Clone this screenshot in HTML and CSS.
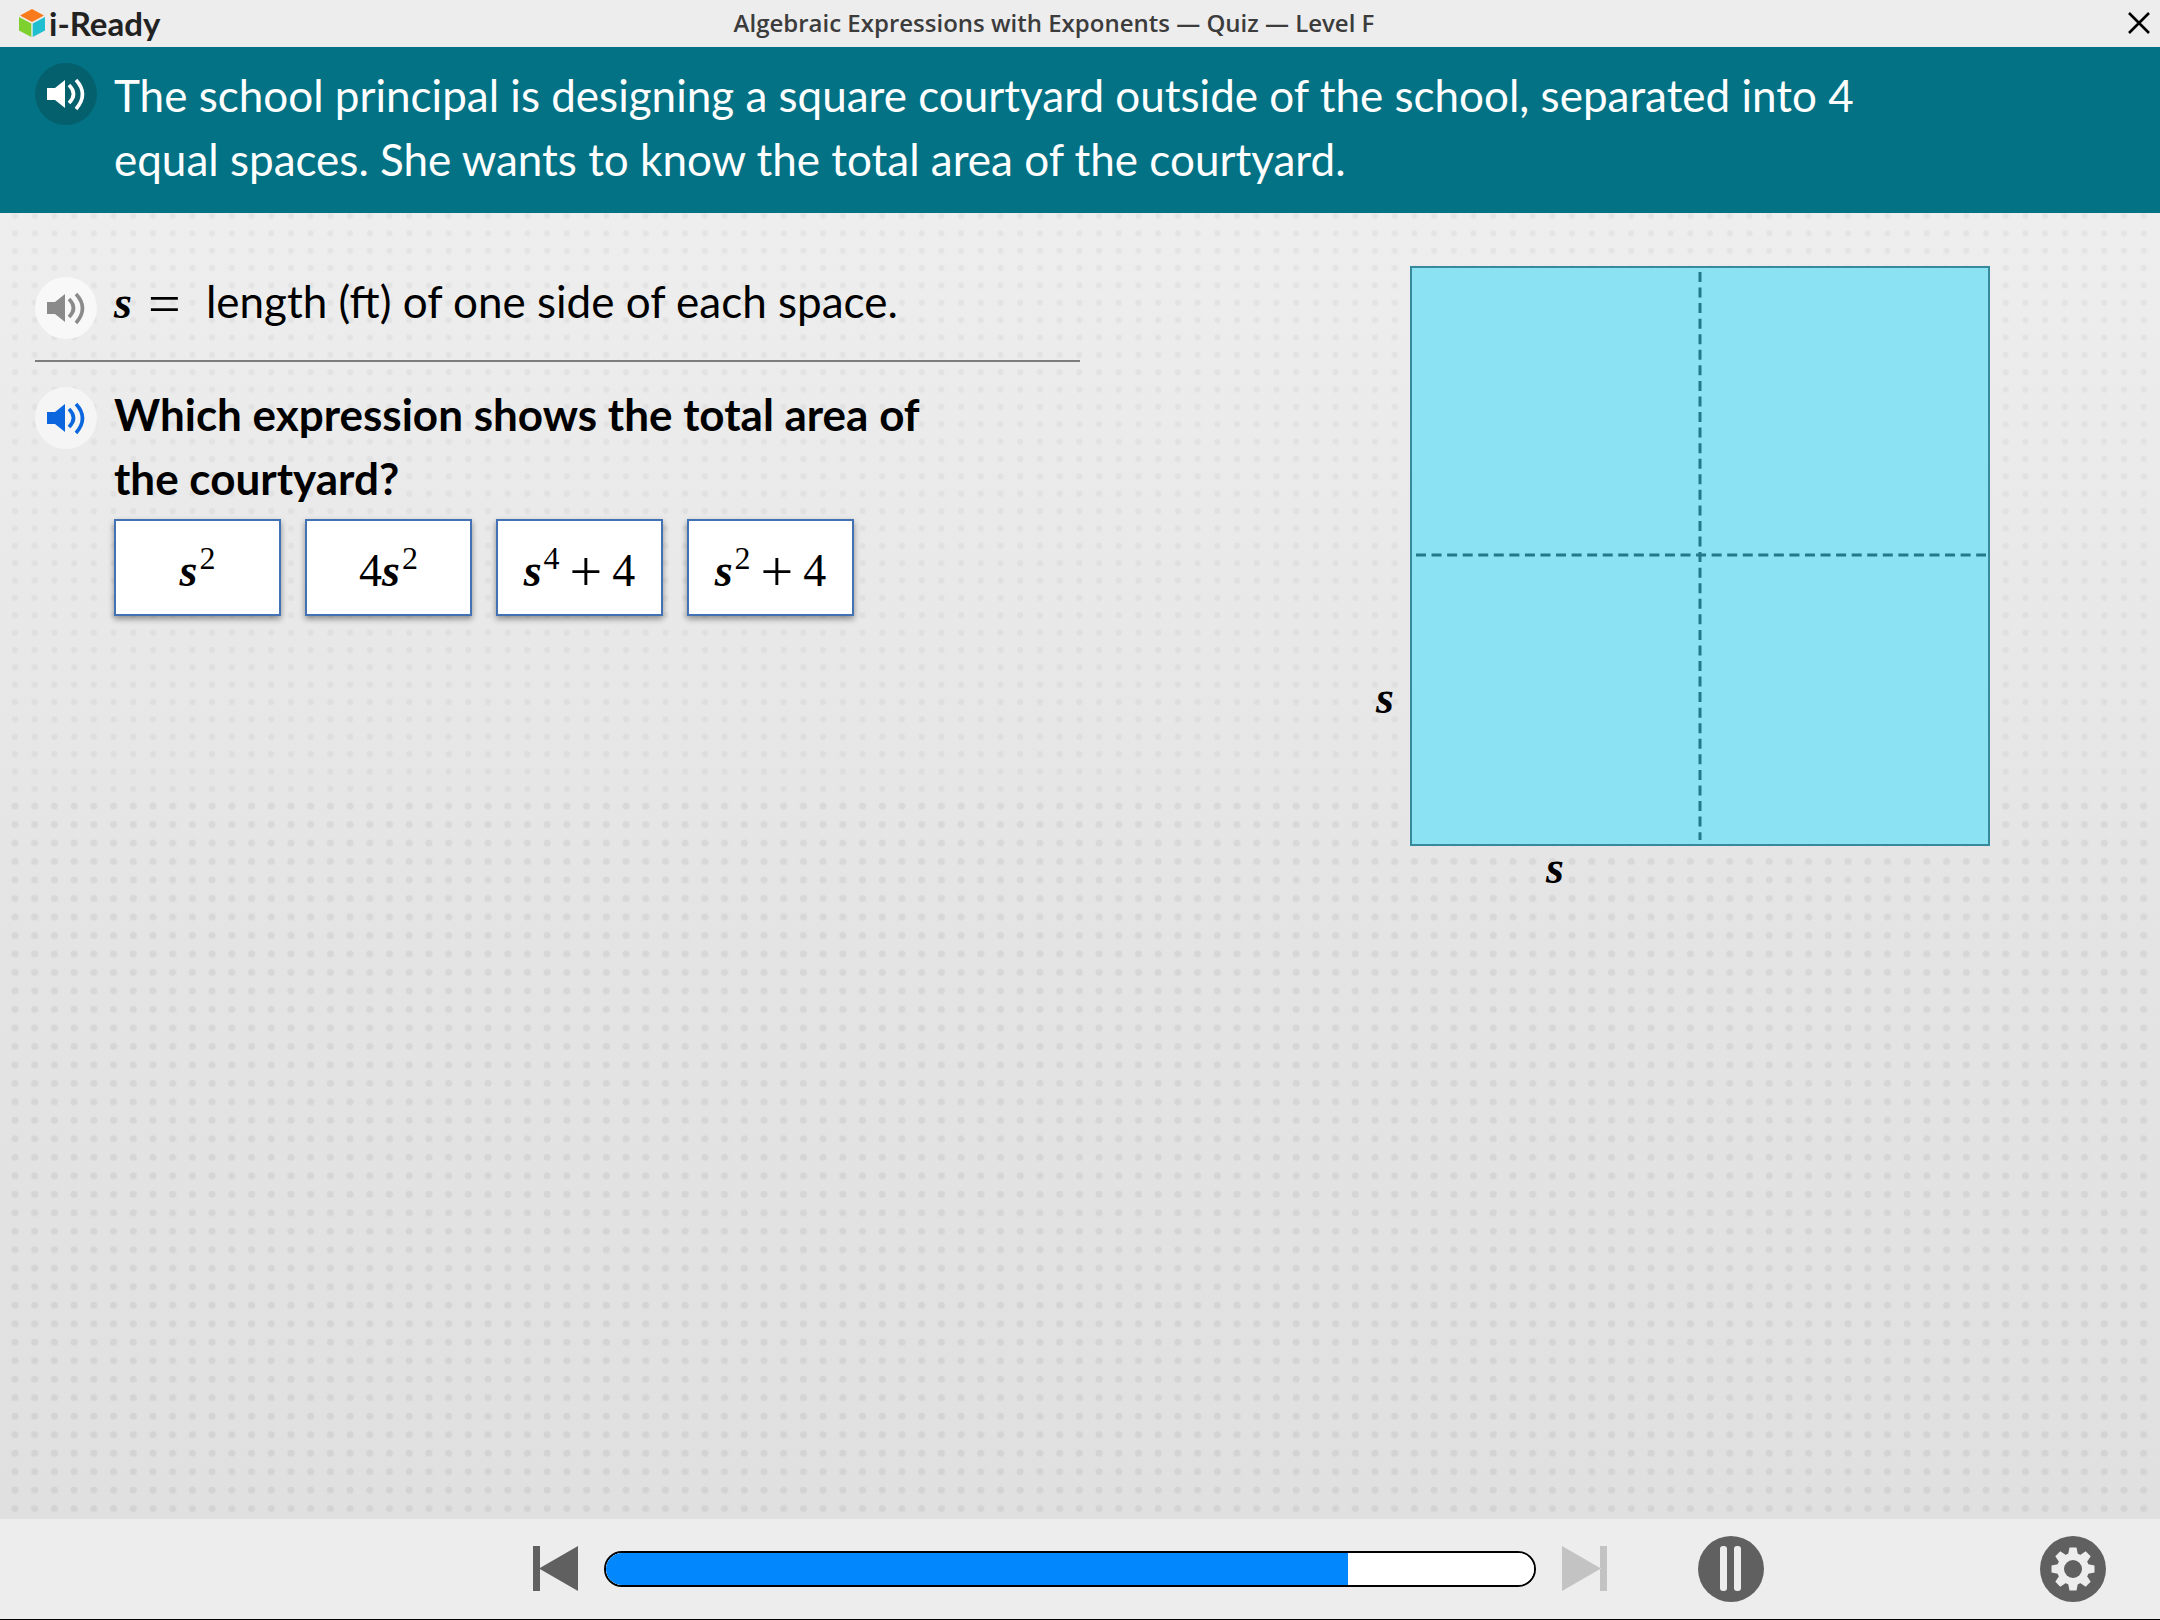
FILE: index.html
```
<!DOCTYPE html>
<html lang="en">
<head>
<meta charset="UTF-8" />
<meta name="viewport" content="width=device-width, initial-scale=1" />
<title>Algebraic Expressions with Exponents — Quiz — Level F</title>
<link rel="stylesheet" href="styles.css">
</head>
<body>

<svg class="sprite" aria-hidden="true">
  <symbol id="speaker" viewBox="0 0 62 62">
    <path d="M12 25h8l10-8v28l-10-8h-8z" fill="currentColor"/>
    <path d="M34 22q9 9 0 18M41 17q13 14 0 29" fill="none" stroke="currentColor" stroke-width="3.600"/>
  </symbol>
</svg>

<header class="topbar">
  <div class="logo">
    <svg class="logo-cube" viewBox="0 0 26 28" aria-hidden="true">
      <path d="M13 0l12 6.500-12 6.500L1 6.500z" fill="#f97b1c"/>
      <path d="M0 8l12.300 6.500V28L0 21.500z" fill="#7ed02f"/>
      <path d="M26 8l-12.300 6.500V28L26 21.500z" fill="#1fbfd0"/>
    </svg>
    <span class="logo-text">i-Ready</span>
  </div>
  <h1 class="title">Algebraic Expressions with Exponents — Quiz — Level F</h1>
  <button class="close" aria-label="Close">
    <svg viewBox="0 0 22 22"><path d="M1 1l20 20M21 1L1 21" stroke="#000" stroke-width="2.600"/></svg>
  </button>
</header>

<section class="banner row">
  <button class="audio audio-dark" aria-label="Play problem"><svg><use href="#speaker"/></svg></button>
  <p class="text">The school principal is designing a square courtyard outside of the school, separated into 4 equal spaces. She wants to know the total area of the courtyard.</p>
</section>

<main class="stage">
  <!-- dot texture, a bit looser and darker in the lower part -->
  <svg class="dots" aria-hidden="true">
    <defs>
      <pattern id="dot-top" width="19.710" height="17.360" patternUnits="userSpaceOnUse">
        <circle cx="15" cy="3" r="3"/>
      </pattern>
      <pattern id="dot-low" y="584" width="19.710" height="18.490" patternUnits="userSpaceOnUse">
        <circle cx="15" cy="9" r="3.500"/>
      </pattern>
    </defs>
    <rect class="dots-top" width="100%" height="584" fill="url(#dot-top)"/>
    <rect y="584" width="100%" height="100%" fill="url(#dot-low)"/>
  </svg>

  <div class="work">
    <div class="row given">
      <button class="audio audio-grey" aria-label="Play definition"><svg><use href="#speaker"/></svg></button>
      <p class="text"><span class="math"><b>s</b><span class="op">=</span></span> length (ft) of one side of each space.</p>
    </div>
    <hr>
    <div class="row question">
      <button class="audio audio-blue" aria-label="Play question"><svg><use href="#speaker"/></svg></button>
      <div>
        <h2 class="text">Which expression shows the total area of the courtyard?</h2>
        <div class="choices">
          <button class="choice math"><b>s</b><sup>2</sup></button>
          <button class="choice math">4<b>s</b><sup>2</sup></button>
          <button class="choice math"><b>s</b><sup>4</sup><span class="op">+</span>4</button>
          <button class="choice math"><b>s</b><sup>2</sup><span class="op">+</span>4</button>
        </div>
      </div>
    </div>
  </div>

  <figure class="courtyard">
    <span class="side math"><b>s</b></span>
    <svg class="square" viewBox="0 0 580 580" role="img" aria-label="Square divided into 4 equal spaces">
      <rect x="1" y="1" width="578" height="578"/>
      <path d="M290 6V574M6 289H576"/>
    </svg>
    <span class="bottom math"><b>s</b></span>
  </figure>
</main>

<footer class="controls">
  <button class="skip" aria-label="Previous">
    <svg viewBox="0 0 45 45"><path d="M0 0h7v45H0zM45 0v45L6 22.500z"/></svg>
  </button>
  <progress class="progress" value="80" max="100" aria-label="Lesson progress"></progress>
  <button class="skip" aria-label="Next" disabled>
    <svg viewBox="0 0 45 45"><path d="M38 0h7v45h-7zM0 0v45l39-22.500z"/></svg>
  </button>
  <button class="round pause" aria-label="Pause">
    <svg viewBox="0 0 66 66"><rect x="22" y="10" width="7" height="45" rx="3"/><rect x="36" y="10" width="7" height="45" rx="3"/></svg>
  </button>
  <button class="round settings" aria-label="Settings">
    <svg viewBox="-33 -33 66 66">
      <path id="tooth" d="M-5-14l1.500-7.500h7L5-14V14l-1.500 7.500h-7L-5 14z"/>
      <use href="#tooth" transform="rotate(45)"/>
      <use href="#tooth" transform="rotate(90)"/>
      <use href="#tooth" transform="rotate(135)"/>
      <circle r="16"/>
      <circle class="hole" r="9"/>
    </svg>
  </button>
</footer>

</body>
</html>
```
FILE: styles.css
```
* {
  box-sizing: border-box;
}
body {
  margin: 0;
  min-height: 100vh;
  display: flex;
  flex-direction: column;
  font-family: "Open Sans", sans-serif;
  color: #000;
  background: #ededed;
  border-bottom: 1px solid #000;
}
button {
  padding: 0;
  border: none;
  background: none;
  color: inherit;
  cursor: pointer;
}
svg {
  display: block;
}
.sprite {
  position: absolute;
  width: 0;
  height: 0;
}

/* Top bar */
.topbar {
  display: grid;
  grid-template-columns: 180px 1fr 232px;
  align-items: center;
  height: 47px;
  padding-bottom: 2px;
}
.logo {
  display: flex;
  align-items: center;
  gap: 4px;
  padding-left: 19px;
}
.logo-cube {
  flex: none;
  width: 26px;
  height: 28px;
}
.logo-text {
  font: bold 33px/44px Lato, sans-serif;
  color: #222;
  white-space: nowrap;
}
.title {
  margin: 0;
  text-align: center;
  font-size: 24px;
  font-weight: 600;
  color: #3c3c3c;
}
.close {
  justify-self: end;
  margin-right: 10px;
}
.close svg {
  width: 22px;
  height: 22px;
}

/* Rows with an audio button */
.row {
  display: flex;
  align-items: flex-start;
  gap: 17px;
}
.text {
  margin: 0;
  font-family: Lato, sans-serif;
  font-size: 44px;
  font-weight: 400;
  line-height: 64px;
}
.audio {
  flex: none;
  width: 62px;
  height: 62px;
  border-radius: 50%;
}
.audio svg {
  width: 62px;
  height: 62px;
}
.audio-dark {
  background: #04606c;
  color: #fff;
}
.audio-grey {
  background: #f8f8f8;
  color: #8a8a8a;
  margin-top: 8px;
}
.audio-blue {
  background: #f5f5f5;
  color: #0c66dd;
  margin-top: 5px;
}

.banner {
  padding: 16px 280px 22px 35px;
  background: #037285;
  color: #fff;
}

/* Work area */
.stage {
  position: relative;
  flex: 1;
  display: grid;
  grid-template-columns: 1fr 1fr;
  background: linear-gradient(#eeeeee, #e4e4e4 55%, #e0e0e0);
}
.dots {
  position: absolute;
  width: 100%;
  height: 100%;
  opacity: 0.05;
}
.dots-top {
  opacity: 0.7;
}
.work {
  position: relative;
  padding: 56px 0 0 35px;
}
hr {
  margin: 21px 0 20px;
  border: none;
  border-top: 2px solid #7d7d7d;
}
.question .text {
  max-width: 860px;
  font-weight: 700;
}
.math {
  font-family: "Liberation Serif", serif;
  font-size: 46px;
  line-height: 64px;
}
.math b {
  font-style: italic;
}
.math sup {
  margin-left: 2px;
  font-size: 32px;
  line-height: 0;
}
.op {
  margin: 0 10px;
  font-size: 58px;
  line-height: 0;
  vertical-align: -5px;
}
.given .op {
  margin: 0 14px 0 16px;
}
.choices {
  display: flex;
  gap: 24px;
  margin-top: 9px;
}
.choice {
  width: 167px;
  height: 97px;
  padding-top: 6px;
  background: #fff;
  border: 2px solid #4272b4;
  box-shadow: 0 3px 6px rgba(0, 0, 0, 0.4);
}

/* Figure */
.courtyard {
  position: relative;
  display: grid;
  grid-template-columns: 34px 580px;
  align-content: start;
  margin: 53px 0 0 296px;
}
.square {
  width: 100%;
}
.square rect {
  fill: #8ae2f2;
  stroke: #378a9c;
  stroke-width: 2;
}
.square path {
  stroke: #23798a;
  stroke-width: 3;
  stroke-dasharray: 10 5.560;
}
.side {
  align-self: end;
  margin-bottom: 116px;
}
.bottom {
  grid-column: 2;
  width: 50%;
  text-align: center;
  line-height: 44px;
}

/* Player controls */
.controls {
  display: flex;
  align-items: center;
  height: 100px;
  padding: 0 54px 1px 533px;
}
.skip svg {
  width: 45px;
  height: 45px;
  fill: #5f605f;
}
.skip:disabled svg {
  fill: #c3c3c3;
}
.progress {
  flex: 1;
  margin: 0 26px;
  height: 36px;
  appearance: none;
  border: 2px solid #000;
  border-radius: 18px;
  background: #fff;
  overflow: hidden;
}
.progress::-webkit-progress-bar {
  background: #fff;
}
.progress::-webkit-progress-value {
  background: #0287fc;
}
.round {
  width: 66px;
  height: 66px;
  border-radius: 50%;
  background: #5f605f;
}
.round svg {
  width: 66px;
  height: 66px;
  fill: #ededed;
}
.pause {
  margin: 0 276px 0 91px;
}
.hole {
  fill: #5f605f;
}
```
